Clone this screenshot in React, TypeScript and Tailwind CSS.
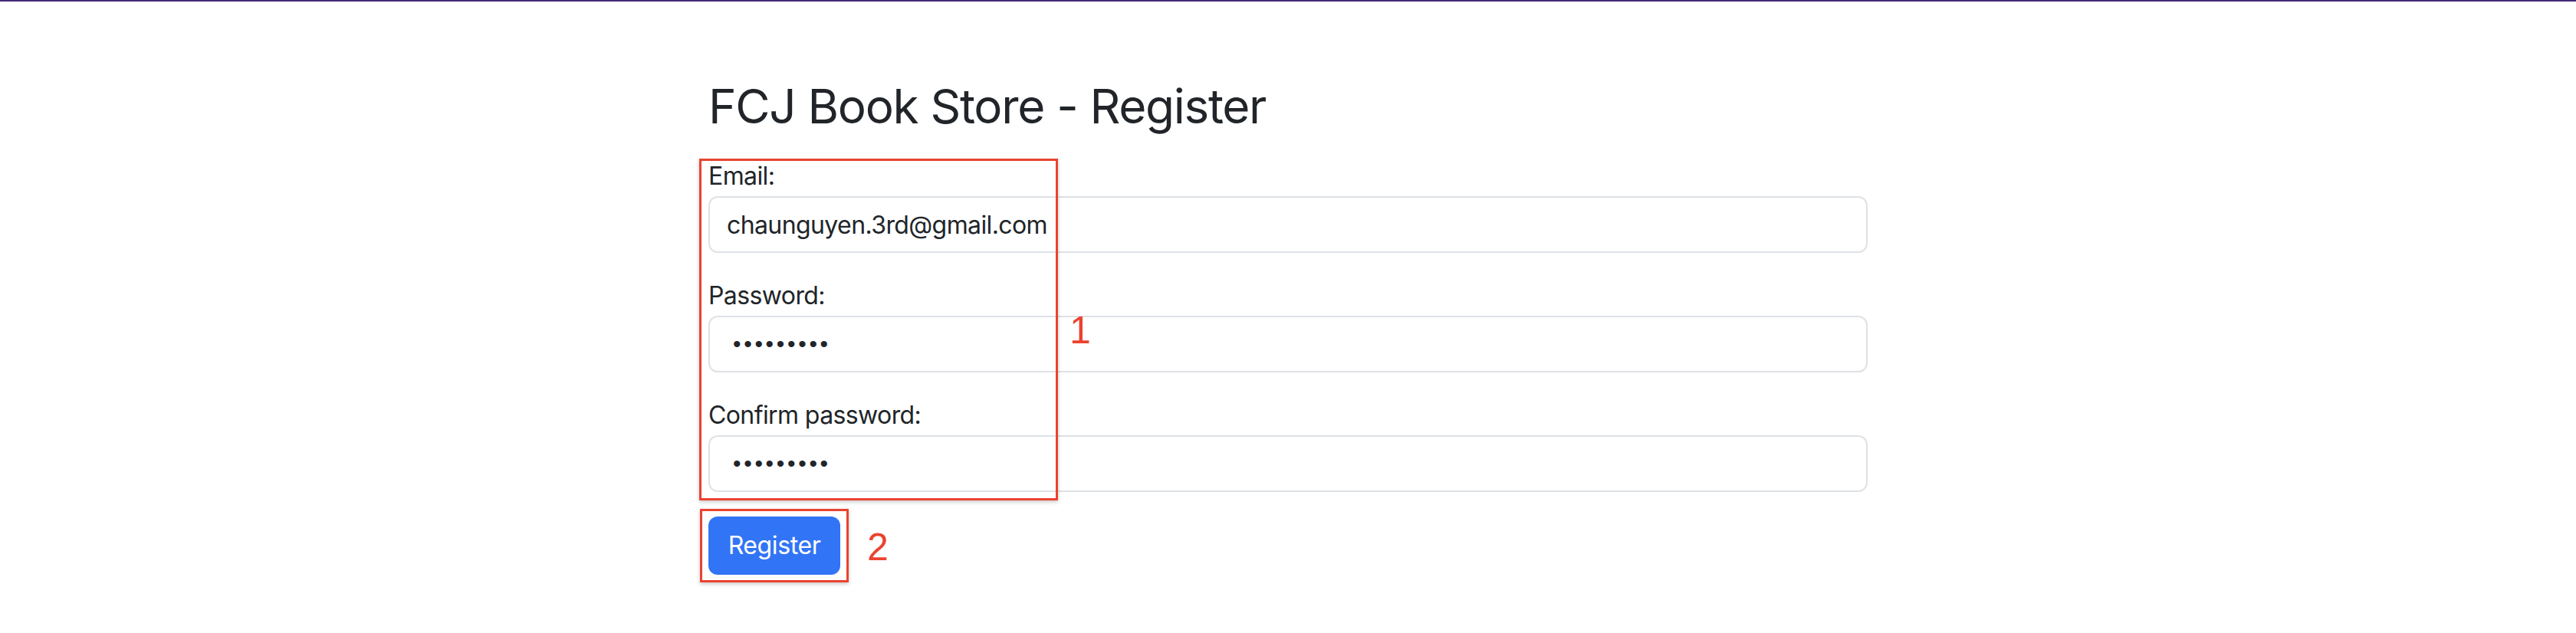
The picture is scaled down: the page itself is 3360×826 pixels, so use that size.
import React from "react";

function Field({
  label,
  type,
  value,
}: {
  label: string;
  type: string;
  value: string;
}) {
  const isPwd = type === "password";
  return (
    <div className="flex flex-col gap-[2px]">
      <label className="h-[48px] text-[32px] leading-[48px] tracking-[-0.6px]">{label}</label>
      <input
        type={type}
        defaultValue={value}
        readOnly
        className={
          isPwd
            ? "h-[74px] w-full rounded-[12px] border-2 border-[#dee2e6] bg-white pl-[30px] pr-[22px] font-['Liberation_Sans',sans-serif] text-[30px] tracking-[3.7px] text-[#212529] outline-none"
            : "h-[74px] w-full rounded-[12px] border-2 border-[#dee2e6] bg-white px-[22px] text-[32px] tracking-[-0.6px] text-[#212529] outline-none"
        }
      />
    </div>
  );
}

export default function App() {
  return (
    <div className="relative min-h-[826px] bg-white font-['Inter',sans-serif] text-[#212529]">
      <div className="h-[2px] bg-[#452a7b]" />
      <main className="relative mx-auto flex w-[1512px] flex-col gap-[30px] pt-[100px]">
        <h2 className="h-[74px] text-[62px] font-normal leading-[74px] tracking-[-1.3px]">FCJ Book Store - Register</h2>
        <form className="flex flex-col gap-[32px]">
          <Field label="Email:" type="email" value="chaunguyen.3rd@gmail.com" />
          <Field label="Password:" type="password" value="123456789" />
          <Field label="Confirm password:" type="password" value="123456789" />
          <button
            type="button"
            className="flex h-[76px] w-[172px] items-center justify-center rounded-[12px] bg-[#3174f6] text-[32px] tracking-[-0.4px] text-white"
          >
            Register
          </button>
        </form>

        <div className="pointer-events-none absolute left-[-12px] top-[205px] h-[446px] w-[468px] border-[3px] border-[#ea4330] shadow-[0_2px_5px_rgba(0,0,0,0.22)]" />
        <div className="pointer-events-none absolute left-[-11px] top-[662px] h-[96px] w-[194px] border-[3px] border-[#ea4330] shadow-[0_2px_5px_rgba(0,0,0,0.22)]" />
        <span className="absolute left-[471px] top-[404px] font-['Liberation_Sans',sans-serif] text-[50px] leading-[50px] text-[#ea4330]">1</span>
        <span className="absolute left-[207px] top-[687px] font-['Liberation_Sans',sans-serif] text-[50px] leading-[50px] text-[#ea4330]">2</span>
      </main>
    </div>
  );
}
